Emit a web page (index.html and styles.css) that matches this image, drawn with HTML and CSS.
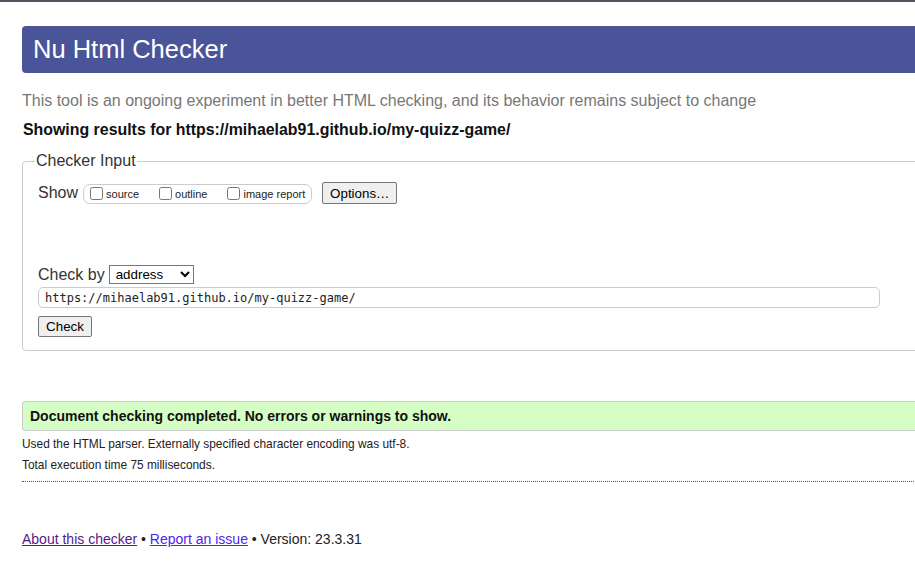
FILE: index.html
```html
<!DOCTYPE html>
<html lang="en">
<head>
<meta charset="utf-8">
<title>Nu Html Checker</title>
<link rel="stylesheet" href="styles.css">
</head>
<body>
<div class="topline"></div>
<main class="page">
  <h1 class="title">Nu Html Checker</h1>
  <p class="lead">This tool is an ongoing experiment in better HTML checking, and its behavior remains subject to change</p>
  <p class="showing">Showing results for https://mihaelab91.github.io/my-quizz-game/</p>
  <form class="checker-form">
    <fieldset class="input-fs">
      <legend class="legend">Checker Input</legend>
      <div class="show-row">
        <span class="show-label">Show</span>
        <span class="opts">
          <label class="opt"><input type="checkbox" class="cb">source</label>
          <label class="opt"><input type="checkbox" class="cb">outline</label>
          <label class="opt last"><input type="checkbox" class="cb">image report</label>
        </span>
        <button type="button" class="btn options-btn">Options…</button>
      </div>
      <div class="checkby-row">
        <span class="checkby-label">Check by</span>
        <select class="sel">
          <option>address</option>
          <option>file upload</option>
          <option>text input</option>
        </select>
      </div>
      <input class="url" type="url" value="https://mihaelab91.github.io/my-quizz-game/">
      <div class="submit-row"><button type="button" class="btn check-btn">Check</button></div>
    </fieldset>
  </form>
  <p class="success">Document checking completed. No errors or warnings to show.</p>
  <div class="details">
    <p class="detail">Used the HTML parser. Externally specified character encoding was utf-8.</p>
    <p class="detail">Total execution time 75 milliseconds.</p>
  </div>
  <p class="footer"><a class="link visited" href="#about">About this checker</a> • <a class="link" href="#issue">Report an issue</a> • Version: 23.3.31</p>
</main>
</body>
</html>
```
FILE: styles.css
```css
html, body {
  margin: 0;
  padding: 0;
  overflow: hidden;
  background: #fff;
}
body {
  font-family: "Liberation Sans", Arial, sans-serif;
  color: #222;
}
.topline {
  height: 2px;
  background: #55535f;
}
.page {
  padding-left: 22px;
  width: 960px;
}
.title {
  margin: 24px 0 0 0;
  height: 47px;
  line-height: 47px;
  padding-left: 11px;
  font-size: 25.5px;
  font-weight: normal;
  color: #fff;
  background: #4a5499;
  border-radius: 4px 0 0 4px;
}
.lead {
  margin: 19px 0 0 0;
  font-size: 16px;
  line-height: 18px;
  color: #777;
}
.showing {
  margin: 11px 0 0 1px;
  font-size: 15.9px;
  line-height: 18px;
  font-weight: bold;
  color: #111;
}
.checker-form {
  margin: 13px 0 0 0;
}
.input-fs {
  margin: 0;
  padding: 0 15px 13px 15px;
  border: 1px solid #ccc;
  border-radius: 4px;
  min-width: 0;
}
.legend {
  padding: 0 1px;
  margin-left: -3px;
  font-size: 16px;
  line-height: 18px;
  color: #333;
}
.show-row {
  display: flex;
  align-items: center;
  margin-top: 12px;
  height: 22px;
  font-size: 16px;
  color: #333;
}
.show-label {
  margin-right: 5px;
}
.opts {
  display: inline-flex;
  align-items: center;
  height: 18px;
  padding: 0 6px 0 2px;
  border: 1px solid #ccc;
  border-radius: 7px;
  font-size: 11px;
  color: #222;
  margin-top: 1px;
}
.opt {
  display: inline-flex;
  align-items: center;
  margin-right: 16px;
}
.opt.last {
  margin-right: 0;
}
.cb {
  width: 13px;
  height: 13px;
  margin: 0 3px 0 4px;
}
.btn {
  font-family: "Liberation Sans", Arial, sans-serif;
  font-size: 13.33px;
  color: #000;
  background: #efefef;
  border: 1px solid #767676;
  border-radius: 2px;
  padding: 1px 6px;
}
.options-btn {
  margin-left: 10px;
  height: 22px;
  width: 75px;
}
.checkby-row {
  display: flex;
  align-items: center;
  margin-top: 61px;
  height: 19px;
  font-size: 16px;
  color: #333;
}
.checkby-label {
  margin-right: 4px;
}
.sel {
  width: 85px;
  height: 19px;
  font-family: "Liberation Sans", Arial, sans-serif;
  font-size: 13.33px;
  color: #000;
  border: 1px solid #767676;
  border-radius: 0;
  padding: 0 0 0 2px;
  background: #fff;
}
.url {
  display: block;
  box-sizing: border-box;
  margin-top: 3px;
  width: 842px;
  height: 21px;
  padding: 0 6px;
  border: 1px solid #ccc;
  border-radius: 5px;
  font-family: "DejaVu Sans Mono", "Liberation Mono", monospace;
  font-size: 12px;
  color: #222;
  outline: none;
}
.submit-row {
  margin-top: 8px;
  height: 21px;
}
.check-btn {
  height: 21px;
  width: 54px;
}
.success {
  margin: 50px 0 0 0;
  box-sizing: border-box;
  height: 30px;
  line-height: 28px;
  padding-left: 7px;
  border: 1px solid #ccc;
  border-radius: 3px 0 0 3px;
  background: #d5ffc5;
  font-size: 14px;
  font-weight: bold;
  color: #111;
}
.details {
  margin-top: 3px;
  padding-bottom: 5px;
  border-bottom: 1px dotted #555;
}
.detail {
  margin: 0;
  font-size: 11.9px;
  line-height: 21px;
  color: #222;
}
.footer {
  margin: 49px 0 0 0;
  font-size: 14px;
  line-height: 16px;
  color: #222;
}
.link {
  color: #4f24ee;
}
.link.visited {
  color: #551a8b;
}
```
